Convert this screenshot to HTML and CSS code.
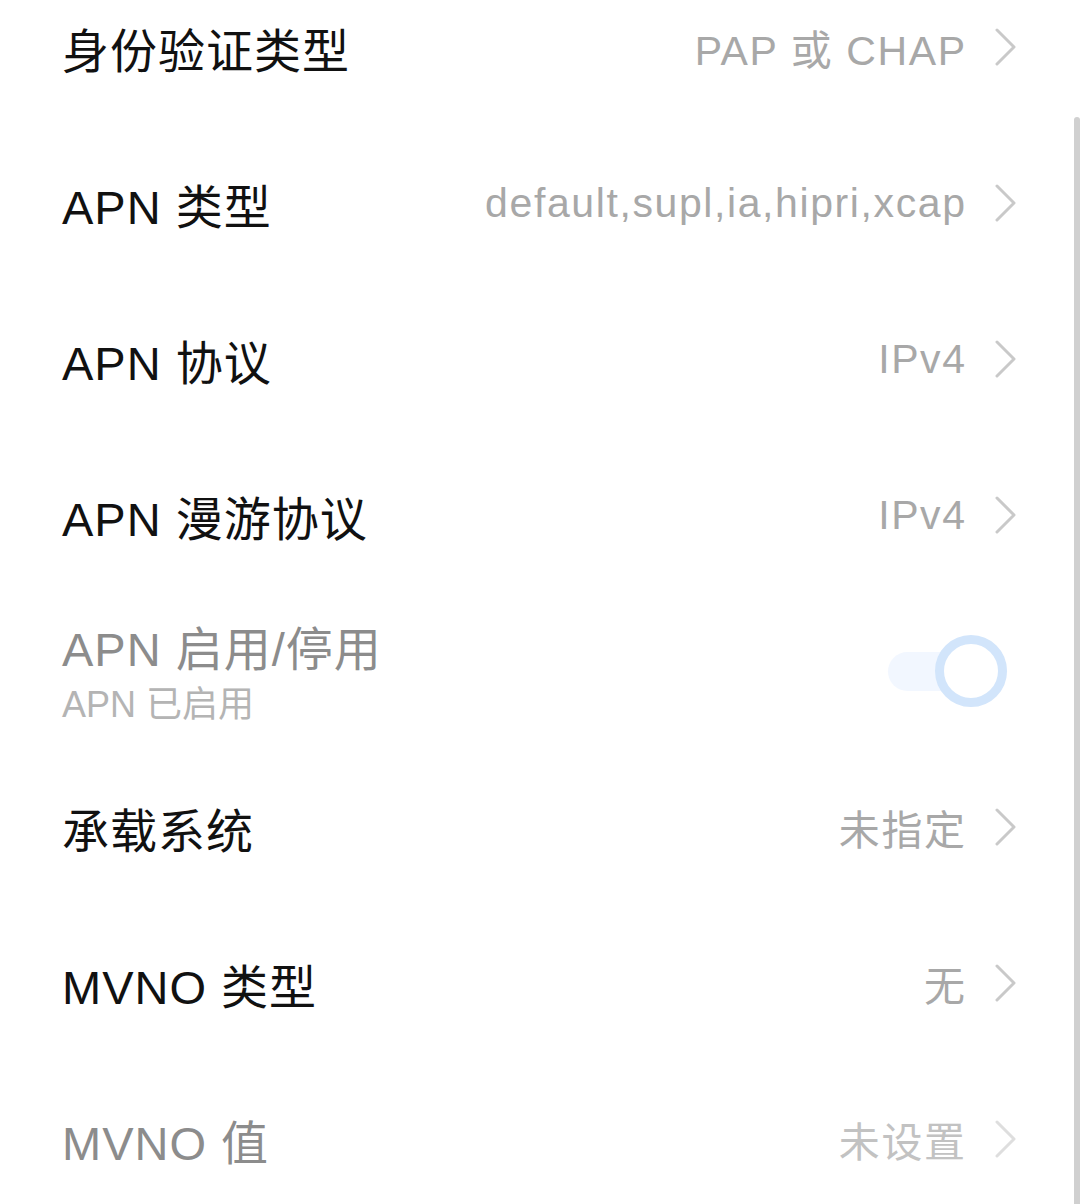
FILE: index.html
```html
<!DOCTYPE html>
<html lang="zh-CN">
<head>
<meta charset="utf-8">
<link rel="stylesheet" href="styles.css">
</head>
<body>
<div class="screen">
  <ul class="list">
    <li class="row">
      <span class="title">身份验证类型</span>
      <span class="value">PAP 或 CHAP</span>
      <svg class="chev" viewBox="0 0 24 38"><path d="M4 2 L21 19 L4 36"/></svg>
    </li>
    <li class="row">
      <span class="title">APN 类型</span>
      <span class="value">default,supl,ia,hipri,xcap</span>
      <svg class="chev" viewBox="0 0 24 38"><path d="M4 2 L21 19 L4 36"/></svg>
    </li>
    <li class="row">
      <span class="title">APN 协议</span>
      <span class="value">IPv4</span>
      <svg class="chev" viewBox="0 0 24 38"><path d="M4 2 L21 19 L4 36"/></svg>
    </li>
    <li class="row">
      <span class="title">APN 漫游协议</span>
      <span class="value">IPv4</span>
      <svg class="chev" viewBox="0 0 24 38"><path d="M4 2 L21 19 L4 36"/></svg>
    </li>
    <li class="row disabled">
      <div class="texts">
        <span class="title">APN 启用/停用</span>
        <span class="sub">APN 已启用</span>
      </div>
      <div class="toggle"><span class="knob"></span></div>
    </li>
    <li class="row">
      <span class="title">承载系统</span>
      <span class="value">未指定</span>
      <svg class="chev" viewBox="0 0 24 38"><path d="M4 2 L21 19 L4 36"/></svg>
    </li>
    <li class="row">
      <span class="title">MVNO 类型</span>
      <span class="value">无</span>
      <svg class="chev" viewBox="0 0 24 38"><path d="M4 2 L21 19 L4 36"/></svg>
    </li>
    <li class="row disabled">
      <span class="title">MVNO 值</span>
      <span class="value light">未设置</span>
      <svg class="chev light" viewBox="0 0 24 38"><path d="M4 2 L21 19 L4 36"/></svg>
    </li>
  </ul>
  <div class="scrollbar"></div>
</div>
</body>
</html>
```

FILE: styles.css
```css
html, body {
  margin: 0;
  padding: 0;
  background: #fff;
}
body {
  font-family: "Liberation Sans", "Noto Sans CJK SC", sans-serif;
}
.screen {
  position: relative;
  width: 1080px;
  height: 1204px;
  overflow: hidden;
  background: #fff;
}
.list {
  list-style: none;
  margin: -31px 0 0 0;
  padding: 0;
}
.row {
  height: 156px;
  display: flex;
  align-items: center;
  padding: 0 63px 0 62px;
}
.title {
  font-size: 47px;
  letter-spacing: 1px;
  color: #111;
  flex: 1;
  white-space: nowrap;
}
.value {
  font-size: 41px;
  letter-spacing: 1.6px;
  color: #a8a8a8;
  white-space: nowrap;
  margin-right: -1.6px;
}
.value.light {
  color: #c2c2c2;
}
.chev {
  width: 24px;
  height: 38px;
  margin-left: 28px;
  fill: none;
  stroke: #c9c9c9;
  stroke-width: 3;
  stroke-linecap: round;
  stroke-linejoin: round;
}
.chev.light {
  stroke: #dedede;
}
.disabled .title {
  color: #8c8c8c;
}
.texts {
  flex: 1;
  display: flex;
  flex-direction: column;
  padding-top: 12px;
}
.texts .title {
  line-height: 56px;
}
.sub {
  font-size: 36px;
  color: #b4b4b4;
  line-height: 54px;
}
.toggle {
  position: relative;
  width: 119px;
  height: 39px;
  border-radius: 20px;
  background: #f2f7ff;
  margin-right: 10px;
}
.knob {
  position: absolute;
  right: 0;
  top: 50%;
  width: 54px;
  height: 54px;
  margin-top: -36px;
  border-radius: 50%;
  border: 9px solid #d2e5fb;
  background: #fff;
}
.scrollbar {
  position: absolute;
  right: 0;
  top: 117px;
  bottom: 0;
  width: 6px;
  background: #d0d0d0;
  border-radius: 3px 3px 0 0;
}
```
